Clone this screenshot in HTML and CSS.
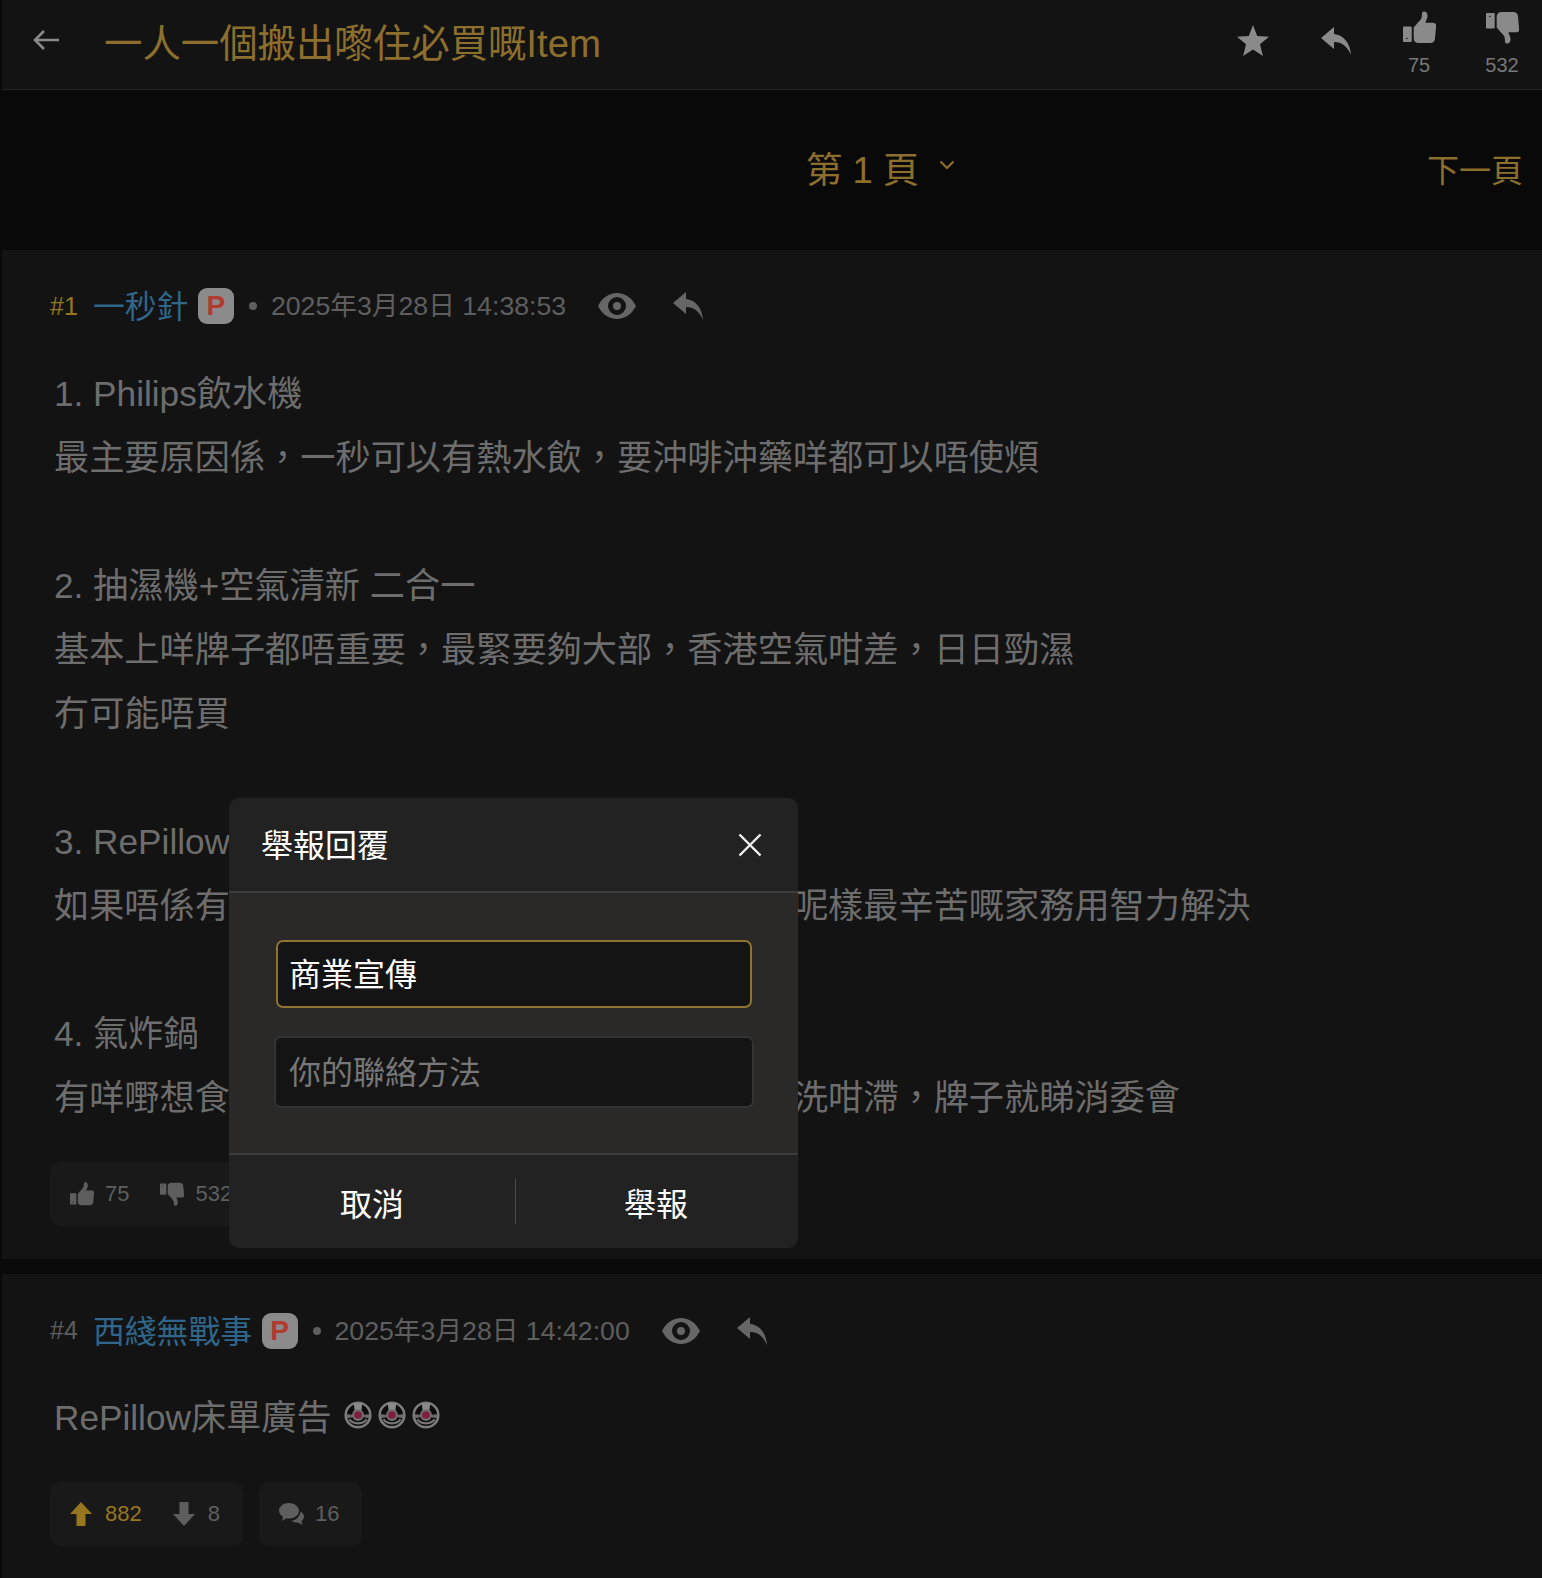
FILE: index.html
```html
<!DOCTYPE html>
<html lang="zh-Hant">
<head>
<meta charset="utf-8">
<title>一人一個搬出嚟住必買嘅Item</title>
<link rel="stylesheet" href="styles.css">
</head>
<body>
<svg class="defs" width="0" height="0" aria-hidden="true">
  <symbol id="i-reply" viewBox="0 0 32 30"><path d="M14 1 1 12l13 11v-7c8 0 13 4 17 13C30 17 24 9 14 8z"/></symbol>
  <symbol id="i-up" viewBox="0 0 34 34"><path fill-rule="evenodd" d="M1 16h7a1 1 0 0 1 1 1v14a1 1 0 0 1-1 1H1a1 1 0 0 1-1-1V17a1 1 0 0 1 1-1zm3 11.500a.8.8 0 1 0 0 1.600.8.8 0 0 0 0-1.600zM11 17l7-8c2-2 1-5 2-8 4-2 6 2 5 6l-2 5h8c3 0 4 3 3 5l-1 11c0 3-2 5-5 5H16c-3 0-5-2-5-5z"/></symbol>
  <symbol id="i-down" viewBox="0 0 34 34"><g transform="matrix(1 0 0 -1 0 34)"><path fill-rule="evenodd" d="M1 16h7a1 1 0 0 1 1 1v14a1 1 0 0 1-1 1H1a1 1 0 0 1-1-1V17a1 1 0 0 1 1-1zm3 11.500a.8.8 0 1 0 0 1.600.8.8 0 0 0 0-1.600zM11 17l7-8c2-2 1-5 2-8 4-2 6 2 5 6l-2 5h8c3 0 4 3 3 5l-1 11c0 3-2 5-5 5H16c-3 0-5-2-5-5z"/></g></symbol>
  <symbol id="i-eye" viewBox="0 0 38 26"><path fill-rule="evenodd" d="M19 0c8 0 15 5 19 13-4 8-11 13-19 13S4 21 0 13C4 5 11 0 19 0zm0 4a9 9 0 1 0 0 18 9 9 0 0 0 0-18zm0 5a4 4 0 1 1 0 8 4 4 0 0 1 0-8z"/></symbol>
  <symbol id="i-clown" viewBox="0 0 28 28">
    <circle cx="14" cy="14" r="13" fill="#0c0c0c"/>
    <circle cx="14" cy="14" r="11.5" fill="none" stroke="#7c7c7c" stroke-width="2.4"/>
    <path d="M10 3h8l-1 8h-6z" fill="#8a8a8a"/>
    <path d="M3 13l7 1-1 2-5 1zM25 13l-7 1 1 2 5 1z" fill="#6a6a6a"/>
    <path d="M6 18c3 5 13 5 16 0" fill="none" stroke="#777" stroke-width="2"/>
    <circle cx="14" cy="14" r="5.5" fill="#737073"/>
    <circle cx="14" cy="14" r="3.6" fill="#7d1f3d"/>
  </symbol>
</svg>

<div class="page">
  <header class="topbar">
    <svg class="back" viewBox="0 0 26 22" aria-label="返回"><path d="M11 2 2 11l9 9M2 11h24" fill="none" stroke="#8a8a8a" stroke-width="2.6"/></svg>
    <h1 class="topic">一人一個搬出嚟住必買嘅Item</h1>
    <div class="actions">
      <div class="action"><svg class="ic-star" viewBox="0 0 32 31"><path d="M16 0l4.2 10.9L32 11.700l-9 7.500L25.900 31 16 24.500 6.100 31 9 19.200l-9-7.500 11.800-.8z"/></svg></div>
      <div class="action"><svg class="ic-reply"><use href="#i-reply"/></svg></div>
      <div class="action"><svg class="ic-thumb"><use href="#i-up"/></svg><span class="count">75</span></div>
      <div class="action"><svg class="ic-thumb"><use href="#i-down"/></svg><span class="count">532</span></div>
    </div>
  </header>

  <nav class="pager">
    <div class="page-select"><span>第 1 頁</span><svg class="chev" viewBox="0 0 16 10"><path d="M1.500 1.500 8 8l6.500-6.500" fill="none" stroke="#8c6e2d" stroke-width="2.200"/></svg></div>
    <a class="next">下一頁</a>
  </nav>

  <article class="post">
    <div class="meta">
      <span class="floor gold">#1</span>
      <span class="name">一秒針</span>
      <span class="badge">P</span>
      <span class="dot"></span>
      <time class="date">2025年3月28日 14:38:53</time>
      <svg class="ic-eye"><use href="#i-eye"/></svg>
      <svg class="ic-reply-sm"><use href="#i-reply"/></svg>
    </div>
    <div class="body">
      <p>1. Philips飲水機</p>
      <p>最主要原因係，一秒可以有熱水飲，要沖啡沖藥咩都可以唔使煩</p>
      <p class="blank"></p>
      <p>2. 抽濕機+空氣清新 二合一</p>
      <p>基本上咩牌子都唔重要，最緊要夠大部，香港空氣咁差，日日勁濕</p>
      <p>冇可能唔買</p>
      <p class="blank"></p>
      <p>3. RePillow</p>
      <p>如果唔係有<span class="hidden-text">一個人住真係唔會知道換床單有幾麻</span>呢樣最辛苦嘅家務用智力解決</p>
      <p class="blank"></p>
      <p>4. 氣炸鍋</p>
      <p>有咩嘢想食<span class="hidden-text">就即刻整到，又唔使開爐又唔使煮又</span>洗咁滯，牌子就睇消委會</p>
    </div>
    <div class="votes">
      <div class="vote-box">
        <span class="vote"><svg class="ic-thumb-sm"><use href="#i-up"/></svg>75</span>
        <span class="vote"><svg class="ic-thumb-sm"><use href="#i-down"/></svg>532</span>
      </div>
    </div>
  </article>

  <article class="post">
    <div class="meta">
      <span class="floor">#4</span>
      <span class="name">西綫無戰事</span>
      <span class="badge">P</span>
      <span class="dot"></span>
      <time class="date">2025年3月28日 14:42:00</time>
      <svg class="ic-eye"><use href="#i-eye"/></svg>
      <svg class="ic-reply-sm"><use href="#i-reply"/></svg>
    </div>
    <div class="body">
      <p class="with-emoji">RePillow床單廣告
        <svg class="clown first"><use href="#i-clown"/></svg><svg class="clown"><use href="#i-clown"/></svg><svg class="clown"><use href="#i-clown"/></svg>
      </p>
    </div>
    <div class="votes">
      <div class="vote-box vote-box-wide">
        <span class="vote vote-arrow gold"><svg class="ic-arrow" viewBox="0 0 22 24"><path d="M11 0l11 12h-6.500v12h-9V12H0z"/></svg>882</span>
        <span class="vote vote-arrow"><svg class="ic-arrow" viewBox="0 0 22 24"><path d="M11 24 0 12h6.500V0h9v12H22z"/></svg>8</span>
      </div>
      <div class="vote-box">
        <span class="vote"><svg class="ic-bubble" viewBox="0 0 25 23"><path d="M10 0c5.500 0 10 3.400 10 7.800s-4.500 7.800-10 7.800c-1 0-1.800-.1-2.600-.3L3 18l1-4.300C1.500 12.300 0 10.200 0 7.800 0 3.400 4.500 0 10 0z"/><path d="M21.500 8.500c2 1.200 3.500 3 3.500 5 0 1.800-1 3.300-2.500 4.400l.8 4-4.200-2.500c-2.500.4-5-.3-6.600-1.700 4.500-.3 8.500-4 9-9.200z"/></svg>16</span>
      </div>
    </div>
  </article>
</div>

<section class="modal" role="dialog" aria-label="舉報回覆">
  <header class="modal-head">
    <h2 class="modal-title">舉報回覆</h2>
    <svg class="modal-close" viewBox="0 0 24 24"><path d="M1.500 1.500l21 21M22.500 1.500l-21 21" stroke="#f2f2f2" stroke-width="2.400" fill="none"/></svg>
  </header>
  <div class="modal-body">
    <input class="field field-active" value="商業宣傳">
    <input class="field" placeholder="你的聯絡方法">
  </div>
  <footer class="modal-foot">
    <button class="foot-btn">取消</button>
    <button class="foot-btn foot-sep">舉報</button>
  </footer>
</section>
</body>
</html>
```

FILE: styles.css
```css
* { box-sizing: border-box; }
html, body { margin: 0; padding: 0; height: 1578px; overflow: hidden; }
body {
  position: relative;
  background: #090909;
  font-family: "Liberation Sans", "Noto Sans CJK TC", sans-serif;
  color: #6d6d6d;
}
.defs { position: absolute; }
.page { margin-left: 2px; }
p, h1, h2 { margin: 0; font-weight: 400; }
svg { display: block; fill: currentColor; flex: none; }

.topbar {
  height: 90px;
  display: flex;
  align-items: center;
  background: #131313;
  border-bottom: 1px solid #242424;
  padding-left: 31px;
}
.back { width: 26px; height: 22px; margin: 0 45px 9px 0; }
.topic { font-size: 38.400px; line-height: 50px; color: #8c6e2d; flex: 1; padding-bottom: 1px; white-space: nowrap; }
.actions { display: flex; gap: 3px; color: #8a8a8a; }
.action { width: 80px; height: 89px; padding-bottom: 8px; display: flex; flex-direction: column; align-items: center; justify-content: center; }
.ic-star { width: 32px; height: 31px; }
.ic-reply { width: 32px; height: 30px; }
.ic-thumb { width: 33px; height: 33px; margin-top: 7px; }
.count { font-size: 20px; line-height: 24px; margin-top: 9px; color: #777; }

.pager {
  height: 160px;
  display: flex;
  align-items: center;
  justify-content: space-between;
  padding: 2px 19px 0 804px;
  color: #8c6e2d;
}
.page-select { display: flex; align-items: center; font-size: 36.400px; line-height: 48px; gap: 20px; }
.chev { width: 16px; height: 10px; margin-bottom: 12px; }
.next { font-size: 32px; line-height: 48px; }

.post { background: #131313; padding: 38px 48px 33px; }
.post + .post { margin-top: 15px; height: 305px; padding-top: 39px; }
.meta { display: flex; align-items: center; height: 36px; color: #5e5e5e; }
.floor { font-size: 25px; width: 43px; color: #5e5e5e; }
.gold { color: #96761f; }
.name { font-size: 31.800px; line-height: 36px; margin: 2px 9.500px 0 0; color: #2f668a; }
.badge {
  width: 36px; height: 36px; border-radius: 9px;
  background: #8b8b8b; color: #b23a2e;
  font-size: 28px; font-weight: 700; line-height: 36px; text-align: center;
}
.dot { width: 8px; height: 8px; border-radius: 50%; background: #5e5e5e; margin: 0 14px 0 15px; }
.date { font-size: 26.700px; line-height: 36px; white-space: nowrap; width: 327px; }
.ic-eye { width: 38px; height: 26px; color: #666; }
.ic-reply-sm { width: 32px; height: 30px; margin-left: 36px; color: #666; }

.body { margin-top: 37.500px; padding-left: 4px; font-size: 35.200px; line-height: 64px; color: #6d6d6d; white-space: nowrap; }
.blank { height: 64px; }
.hidden-text { visibility: hidden; }
.with-emoji { display: flex; align-items: center; }
.clown { width: 30px; height: 30px; margin-right: 4px; margin-bottom: 6px; }
.clown.first { margin-left: 11px; }

.votes { display: flex; gap: 16px; margin-top: 32px; }
.vote-box {
  height: 64px; background: #191919; border-radius: 10px;
  display: flex; align-items: center; gap: 31px;
  padding: 0 23px 0 20px;
  font-size: 22px; color: #5e5e5e;
}
.vote { display: flex; align-items: center; gap: 11px; }
.vote-arrow { gap: 13px; }
.vote.gold { color: #96761f; }
.ic-thumb-sm { width: 24px; height: 24px; }
.ic-arrow { width: 22px; height: 24px; }
.ic-bubble { width: 25px; height: 23px; }

.modal {
  position: absolute; left: 229px; top: 798px;
  width: 569px; height: 450px;
  background: #222;
  border-radius: 10px;
  display: flex; flex-direction: column;
  color: #fff;
}
.modal-head {
  height: 95px; flex: none;
  border-bottom: 2px solid #3c3c3c;
  display: flex; align-items: center; justify-content: space-between;
  padding: 0 36px 0 32px;
}
.modal-title { font-size: 32px; line-height: 44px; padding-top: 2px; }
.modal-close { width: 24px; height: 24px; }
.modal-body {
  height: 260px; flex: none;
  background: #2a2927;
  padding: 47px 44px 0 45px;
  display: flex; flex-direction: column; gap: 28px;
}
.field {
  display: block; width: 100%; height: 72px;
  background: #141414; color: #fff;
  border: 2px solid #333; border-radius: 7px;
  font: 32px "Liberation Sans", "Noto Sans CJK TC", sans-serif;
  padding: 3px 12px 0 13px; outline: none;
}
.field::placeholder { color: #777; opacity: 1; }
.field-active { height: 68px; width: 476px; margin-left: 2px; border-color: #8f7330; padding: 0 12px 4px 11px; }
.modal-foot {
  flex: 1; display: grid; grid-template-columns: 286px 283px;
  border-top: 2px solid #3c3c3c; align-items: center;
}
.foot-btn {
  background: none; border: 0; color: #fff; height: 45px; padding: 0 0 4px;
  font: 32px "Liberation Sans", "Noto Sans CJK TC", sans-serif;
}
.foot-sep { border-left: 1px solid #4a4a4a; padding-right: 2px; }
```
